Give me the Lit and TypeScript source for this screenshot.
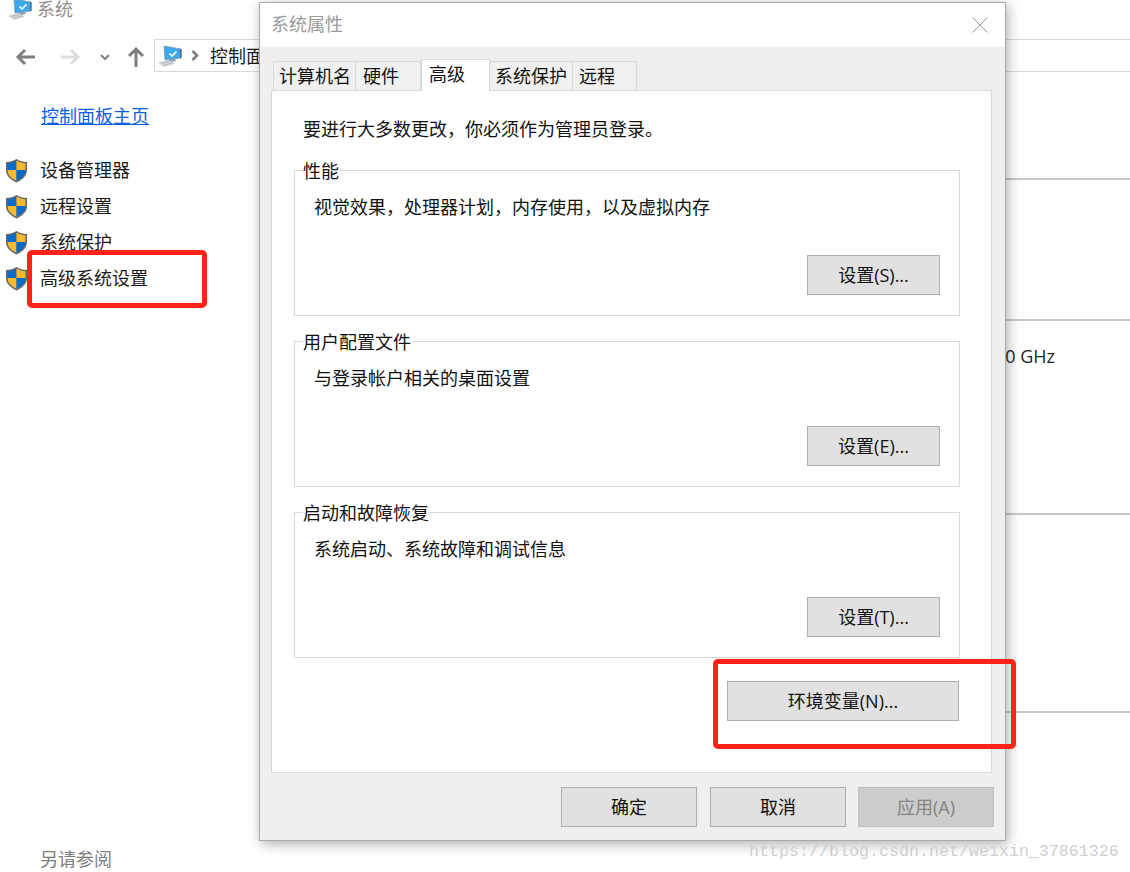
import { LitElement, html, css, svg } from "lit";
import { customElement } from "lit/decorators.js";

const pcIcon = (w: number, h: number) => html`<svg class="pc" width=${w} height=${h} viewBox="0 0 24 22">
  <polygon points="6,1 23,4 23,13 7,15" fill="#3aa9ef" stroke="#7f97a8" stroke-width=".8"/>
  <polygon points="22,4 23.5,4.3 23.5,13 22,13.2" fill="#51697a"/>
  <polyline points="11.5,8.5 14,11 18.5,6.5" fill="none" stroke="#fff" stroke-width="1.7"/>
  <polygon points="11,15 17,14 18,16 12,17" fill="#8a9aa6"/>
  <polygon points="1,18 11,15.5 16,18.5 6,21.5" fill="#d8dcde" stroke="#b0b6ba" stroke-width=".6"/>
  <path d="M4 18.4 L11.5 16.6 M6 20 L13.5 18" stroke="#a4abb0" stroke-width=".7"/>
</svg>`;

const shield = html`<svg class="shield" width="23" height="25" viewBox="0 0 23 25">
  <path d="M11.5 1 C8.5 3 5 4 1 4 V12 C1 18 6 22 11.5 24.5 C17 22 22 18 22 12 V4 C18 4 14.5 3 11.5 1 Z" fill="#666"/>
  <path d="M11.5 2.6 C8.7 4.3 6 5.1 2.6 5.3 V12 H11.5 Z" fill="#0a6cc7"/>
  <path d="M11.5 2.6 C14.3 4.3 17 5.1 20.4 5.3 V12 H11.5 Z" fill="#fbb92f"/>
  <path d="M2.6 12 H11.5 V22.8 C7 20.8 2.6 17.4 2.6 12 Z" fill="#fbb92f"/>
  <path d="M20.4 12 H11.5 V22.8 C16 20.8 20.4 17.4 20.4 12 Z" fill="#0a6cc7"/>
</svg>`;

const arrow = (d: string, color: string, w: number, h: number, sw = 3) => html`<svg width=${w} height=${h} viewBox="0 0 ${w} ${h}">
  ${svg`<path d=${d} fill="none" stroke=${color} stroke-width=${sw}/>`}
</svg>`;

@customElement("app-root")
export class AppRoot extends LitElement {
  static styles = css`
    :host {
      display: block;
      position: relative;
      width: 1130px;
      height: 872px;
      overflow: hidden;
      background: #fff;
      font-family: "Noto Sans CJK SC", "Noto Sans", sans-serif;
      font-size: 18px;
      color: #1a1a1a;
    }
    svg { display: block; flex: none; }

    /* Background window */
    .title {
      height: 39px;
      box-sizing: border-box;
      display: flex;
      gap: 5px;
      padding-left: 8px;
      overflow: hidden;
      color: #8f8f8f;
      line-height: 16px;
    }
    .title svg { margin-top: -2px; }
    .toolbar {
      height: 33px;
      box-sizing: border-box;
      border-top: 1px solid #d9d9d9;
      border-bottom: 1px solid #d9d9d9;
      display: flex;
      align-items: center;
      margin-left: 154px;
      padding-left: 3px;
      border-left: 1px solid #d9d9d9;
      gap: 9px;
      line-height: 1;
    }
    .navs {
      position: absolute;
      left: 15px;
      top: 46px;
      display: flex;
      align-items: center;
      height: 22px;
    }
    .navs .fwd { margin-left: 26px; }
    .navs .down { margin-left: 19px; }
    .navs .up { margin-left: 17px; }
    .toolbar .crumb { margin: 0 0 2px 2px; white-space: nowrap; }
    .body { display: flex; }
    .side {
      width: 262px;
      height: 800px;
      flex: none;
      display: flex;
      flex-direction: column;
    }
    .home {
      margin: 31px 0 0 41px;
      line-height: 24px;
      color: #0a5fe0;
      text-decoration: underline;
    }
    .tasks { margin-top: 25px; display: flex; flex-direction: column; }
    .task {
      height: 36px;
      display: flex;
      align-items: center;
      gap: 12px;
      padding-left: 5px;
    }
    .task span { margin-bottom: 2px; }
    .also { margin: auto 0 2px 40px; color: #7d7d7d; line-height: 24px; }
    .main { flex: 1; }
    .sec { border-bottom: 2px solid #c8c8c8; }
    .s1 { height: 106px; }
    .s2 { height: 139px; }
    .s3 { height: 192px; }
    .s4 { height: 196px; }
    .ghz {
      text-align: right;
      padding: 23px 75px 0 0;
      line-height: 24px;
      color: #262626;
      font-family: "Open Sans", "Noto Sans", sans-serif;
      font-size: 18px;
    }

    /* Dialog */
    .dialog {
      position: absolute;
      left: 259px;
      top: 2px;
      width: 747px;
      height: 839px;
      box-sizing: border-box;
      border: 1px solid #a9a9a9;
      background: #efefef;
      box-shadow: 2px 3px 12px rgba(0, 0, 0, 0.32);
      display: flex;
      flex-direction: column;
    }
    .dlg-title {
      height: 44px;
      flex: none;
      background: #fff;
      display: flex;
      align-items: center;
      justify-content: space-between;
      padding: 0 17px 0 11px;
      color: #9a9a9a;
      line-height: 24px;
    }
    .dlg-title span { margin-bottom: 4px; }
    .tabs {
      display: flex;
      align-items: flex-end;
      height: 32px;
      margin-top: 12px;
      padding-left: 13px;
      position: relative;
      z-index: 1;
      margin-bottom: -1px;
      flex: none;
    }
    .tab {
      height: 30px;
      box-sizing: border-box;
      border: 1px solid #d9d9d9;
      border-left: none;
      background: #f0f0f0;
      line-height: 26px;
      color: #111;
    }
    .tab:first-child { border-left: 1px solid #d9d9d9; }
    .t1 { width: 83px; padding-left: 5px; }
    .t2 { width: 65px; padding-left: 7px; }
    .t3 {
      width: 69px;
      height: 32px;
      padding-left: 7px;
      background: #fff;
      border-left: 1px solid #d9d9d9;
      border-bottom: none;
      line-height: 27px;
    }
    .t4 { width: 83px; padding-left: 5px; }
    .t5 { width: 64px; padding-left: 6px; }
    .panel {
      height: 683px;
      box-sizing: border-box;
      flex: none;
      margin: 0 13px 0 11px;
      background: #fff;
      border: 1px solid #d9d9d9;
      padding: 25px 31px 0 22px;
      display: flex;
      flex-direction: column;
      color: #111;
    }
    .notice { line-height: 24px; margin: 0 0 30px 9px; }
    .group {
      position: relative;
      height: 146px;
      box-sizing: border-box;
      border: 1px solid #d9d9d9;
      margin-bottom: 25px;
      padding: 23px 19px 20px;
      display: flex;
      flex-direction: column;
      flex: none;
    }
    .group.last { margin-bottom: 0; }
    .legend {
      position: absolute;
      left: 8px;
      top: -13px;
      background: #fff;
      line-height: 24px;
      padding: 0 1px 0 0;
    }
    .desc { line-height: 24px; }
    .btn {
      box-sizing: border-box;
      height: 40px;
      background: #e1e1e1;
      border: 1px solid #adadad;
      text-align: center;
      line-height: 39px;
      color: #111;
      flex: none;
      font-family: "Open Sans", "Noto Sans CJK SC", sans-serif;
    }
    .group .btn { width: 133px; margin-top: auto; align-self: flex-end; }
    .env { width: 232px; align-self: flex-end; margin: 23px 1px 0 0; }
    .actions {
      display: flex;
      justify-content: flex-end;
      gap: 13px;
      margin-top: 14px;
      padding-right: 11px;
    }
    .actions .btn { width: 136px; }
    .actions .off { margin-left: -1px; background: #ccc; border-color: #bfbfbf; color: #838383; }

    /* Annotations */
    .mark {
      position: absolute;
      box-sizing: border-box;
      border: 5px solid #ff2317;
      border-radius: 5px;
    }
    .m1 { left: 27px; top: 250px; width: 180px; height: 58px; }
    .m2 { left: 713px; top: 659px; width: 303px; height: 90px; }
    .wm {
      position: absolute;
      left: 749px;
      top: 841px;
      font-family: "Liberation Mono", monospace;
      font-size: 16.67px;
      line-height: 22px;
      color: #cfcfcf;
      white-space: nowrap;
    }
  `;

  render() {
    const tasks = ["设备管理器", "远程设置", "系统保护", "高级系统设置"];
    const groups = [
      { title: "性能", desc: "视觉效果\uFF0C处理器计划\uFF0C内存使用\uFF0C以及虚拟内存", btn: "设置(S)..." },
      { title: "用户配置文件", desc: "与登录帐户相关的桌面设置", btn: "设置(E)..." },
      { title: "启动和故障恢复", desc: "系统启动、系统故障和调试信息", btn: "设置(T)..." },
    ];
    return html`
      <div class="title">${pcIcon(24, 22)}<span>系统</span></div>
      <div class="navs">
        ${arrow("M20 11 H3 M10 4 L3 11 L10 18", "#7f7f7f", 20, 22)}
        <span class="fwd">${arrow("M0 11 H17 M10 4 L17 11 L10 18", "#dedede", 20, 22)}</span>
        <span class="down">${arrow("M1 1 L5 5 L9 1", "#7f7f7f", 10, 7, 2)}</span>
        <span class="up">${arrow("M9 21 V3 M2 10 L9 3 L16 10", "#7f7f7f", 18, 22)}</span>
      </div>
      <div class="toolbar">
        ${pcIcon(24, 22)}
        ${arrow("M1.5 1 L6 5.5 L1.5 10", "#7f7f7f", 8, 11, 2.6)}
        <span class="crumb">控制面板</span>
      </div>
      <div class="body">
        <div class="side">
          <div class="home">控制面板主页</div>
          <div class="tasks">
            ${tasks.map((t) => html`<div class="task">${shield}<span>${t}</span></div>`)}
          </div>
          <div class="also">另请参阅</div>
        </div>
        <div class="main">
          <div class="sec s1"></div>
          <div class="sec s2"></div>
          <div class="sec s3"><div class="ghz">0 GHz</div></div>
          <div class="sec s4"></div>
        </div>
      </div>

      <div class="dialog">
        <div class="dlg-title">
          <span>系统属性</span>
          <svg width="16" height="16" viewBox="0 0 16 16"><path d="M.5 .5 L15.5 15.5 M15.5 .5 L.5 15.5" stroke="#9a9a9a" stroke-width="1" fill="none"/></svg>
        </div>
        <div class="tabs">
          <div class="tab t1">计算机名</div>
          <div class="tab t2">硬件</div>
          <div class="tab t3">高级</div>
          <div class="tab t4">系统保护</div>
          <div class="tab t5">远程</div>
        </div>
        <div class="panel">
          <div class="notice">要进行大多数更改\uFF0C你必须作为管理员登录。</div>
          ${groups.map(
            (g, i) => html`<div class="group ${i === 2 ? "last" : ""}">
              <div class="legend">${g.title}</div>
              <div class="desc">${g.desc}</div>
              <div class="btn">${g.btn}</div>
            </div>`
          )}
          <div class="btn env">环境变量(N)...</div>
        </div>
        <div class="actions">
          <div class="btn">确定</div>
          <div class="btn">取消</div>
          <div class="btn off">应用(A)</div>
        </div>
      </div>

      <div class="mark m1"></div>
      <div class="mark m2"></div>
      <div class="wm">https://blog.csdn.net/weixin_37861326</div>
    `;
  }
}
